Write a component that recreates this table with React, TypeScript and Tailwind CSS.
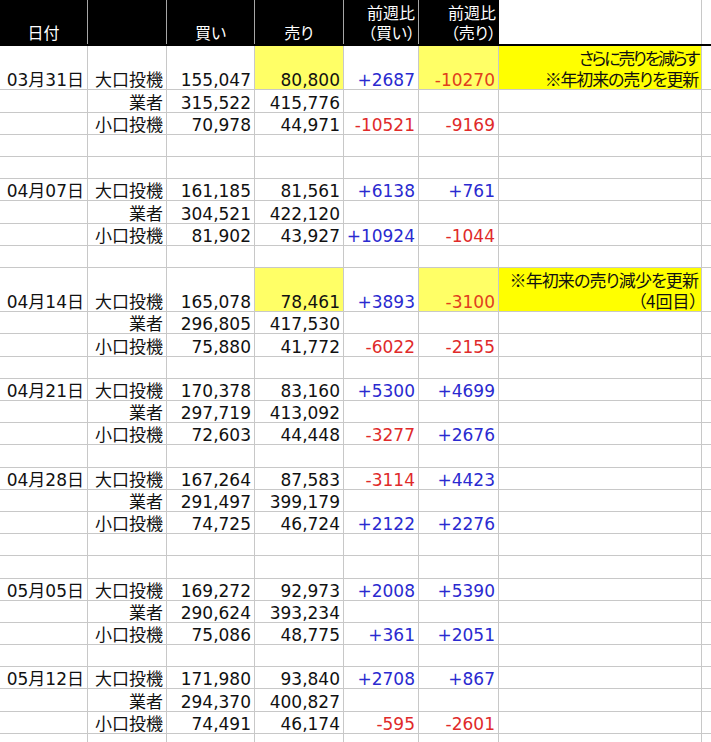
import React from "react";

type Row = {
  tall?: boolean;
  date?: string;
  label?: string;
  buy?: string;
  sell?: string;
  sellHi?: boolean;
  dBuy?: string;
  dSell?: string;
  dSellHi?: boolean;
  note?: [string, string][];
};

const W = ["w-[88px]", "w-[79px]", "w-[88px]", "w-[89px]", "w-[75px]", "w-[80px]", "w-[203px]"];

const NUM = "font-['DejaVu_Sans','Noto_Sans_CJK_JP',sans-serif]";
const JP = "font-['Noto_Sans_CJK_JP',sans-serif] [font-feature-settings:'palt']";

const blank: Row = {};

const rows: Row[] = [
  {
    tall: true,
    date: "03月31日",
    label: "大口投機",
    buy: "155,047",
    sell: "80,800",
    sellHi: true,
    dBuy: "+2687",
    dSell: "-10270",
    dSellHi: true,
    note: [
      ["さらに売りを減らす", "tracking-[-2.3px]"],
      ["※年初来の売りを更新", "tracking-[-1.2px]"],
    ],
  },
  { label: "業者", buy: "315,522", sell: "415,776" },
  { label: "小口投機", buy: "70,978", sell: "44,971", dBuy: "-10521", dSell: "-9169" },
  blank,
  blank,
  { date: "04月07日", label: "大口投機", buy: "161,185", sell: "81,561", dBuy: "+6138", dSell: "+761" },
  { label: "業者", buy: "304,521", sell: "422,120" },
  { label: "小口投機", buy: "81,902", sell: "43,927", dBuy: "+10924", dSell: "-1044" },
  blank,
  {
    tall: true,
    date: "04月14日",
    label: "大口投機",
    buy: "165,078",
    sell: "78,461",
    sellHi: true,
    dBuy: "+3893",
    dSell: "-3100",
    dSellHi: true,
    note: [
      ["※年初来の売り減少を更新", "tracking-[-0.9px]"],
      ["（4回目）", "tracking-normal"],
    ],
  },
  { label: "業者", buy: "296,805", sell: "417,530" },
  { label: "小口投機", buy: "75,880", sell: "41,772", dBuy: "-6022", dSell: "-2155" },
  blank,
  { date: "04月21日", label: "大口投機", buy: "170,378", sell: "83,160", dBuy: "+5300", dSell: "+4699" },
  { label: "業者", buy: "297,719", sell: "413,092" },
  { label: "小口投機", buy: "72,603", sell: "44,448", dBuy: "-3277", dSell: "+2676" },
  blank,
  { date: "04月28日", label: "大口投機", buy: "167,264", sell: "87,583", dBuy: "-3114", dSell: "+4423" },
  { label: "業者", buy: "291,497", sell: "399,179" },
  { label: "小口投機", buy: "74,725", sell: "46,724", dBuy: "+2122", dSell: "+2276" },
  blank,
  blank,
  { date: "05月05日", label: "大口投機", buy: "169,272", sell: "92,973", dBuy: "+2008", dSell: "+5390" },
  { label: "業者", buy: "290,624", sell: "393,234" },
  { label: "小口投機", buy: "75,086", sell: "48,775", dBuy: "+361", dSell: "+2051" },
  blank,
  { date: "05月12日", label: "大口投機", buy: "171,980", sell: "93,840", dBuy: "+2708", dSell: "+867" },
  { label: "業者", buy: "294,370", sell: "400,827" },
  { label: "小口投機", buy: "74,491", sell: "46,174", dBuy: "-595", dSell: "-2601" },
  blank,
  blank,
];

// 増加は青、減少は赤（黄色セルの上は少し橙寄り）
const diffColor = (v?: string, hi?: boolean) => {
  if (!v) return "";
  if (v.startsWith("+")) return "text-[#2a2ad0]";
  return hi ? "text-[#e0401c]" : "text-[#e02a2a]";
};

const Cell = ({ w, className = "", children }: { w: string; className?: string; children?: React.ReactNode }) => (
  <div
    className={`${w} shrink-0 h-full border-r border-[#c8c8c8] flex items-end justify-end pr-[3px] whitespace-nowrap ${className}`}
  >
    {children}
  </div>
);

const DataRow = ({ r }: { r: Row }) => (
  <div className={`flex border-b border-[#c8c8c8] ${r.tall ? "h-[44.4px]" : "h-[22.2px]"}`}>
    <Cell w={W[0]} className={`${NUM} leading-[18px]`}>{r.date}</Cell>
    <Cell w={W[1]} className={`${JP} leading-[20px]`}>{r.label}</Cell>
    <Cell w={W[2]} className={`${NUM} leading-[18px]`}>{r.buy}</Cell>
    <Cell w={W[3]} className={`${NUM} leading-[18px] ${r.sellHi ? "bg-[#ffff66]" : ""}`}>{r.sell}</Cell>
    <Cell w={W[4]} className={`${NUM} leading-[18px] ${diffColor(r.dBuy)}`}>{r.dBuy}</Cell>
    <Cell w={W[5]} className={`${NUM} leading-[18px] ${diffColor(r.dSell, r.dSellHi)} ${r.dSellHi ? "bg-[#ffff66]" : ""}`}>
      {r.dSell}
    </Cell>
    <Cell w={W[6]} className={`${JP} leading-[21px] flex-col items-end justify-end ${r.note ? "bg-[#ffff00]" : ""}`}>
      {r.note?.map(([text, track]) => (
        <span key={text} className={track}>
          {text}
        </span>
      ))}
    </Cell>
    <div className="flex-1 h-full" />
  </div>
);

const HeadCell = ({
  w,
  children,
  right,
  last,
}: {
  w: string;
  children?: React.ReactNode;
  right?: boolean;
  last?: boolean;
}) => (
  <div
    className={`${w} shrink-0 h-full bg-black text-white ${last ? "" : "border-r border-[#a6a6a6]"} flex flex-col ${
      right ? "items-end pr-[3px]" : "items-center"
    } justify-end pb-[2px] ${JP} text-[16px] leading-[20px]`}
  >
    {children}
  </div>
);

export default function App() {
  return (
    <div className="w-[711px] h-[742px] overflow-hidden bg-white text-[17px] text-[#111]">
      <div className="flex h-[46px] border-b-2 border-black">
        <HeadCell w={W[0]}>日付</HeadCell>
        <HeadCell w={W[1]} />
        <HeadCell w={W[2]}>買い</HeadCell>
        <HeadCell w={W[3]}>売り</HeadCell>
        <HeadCell w={W[4]} right>
          <span>前週比</span>
          <span>（買い）</span>
        </HeadCell>
        <HeadCell w={W[5]} right last>
          <span>前週比</span>
          <span>（売り）</span>
        </HeadCell>
        <div className={`${W[6]} shrink-0 h-full border-r border-[#c8c8c8]`} />
        <div className="flex-1 h-full" />
      </div>
      {rows.map((r, i) => (
        <DataRow key={i} r={r} />
      ))}
    </div>
  );
}
